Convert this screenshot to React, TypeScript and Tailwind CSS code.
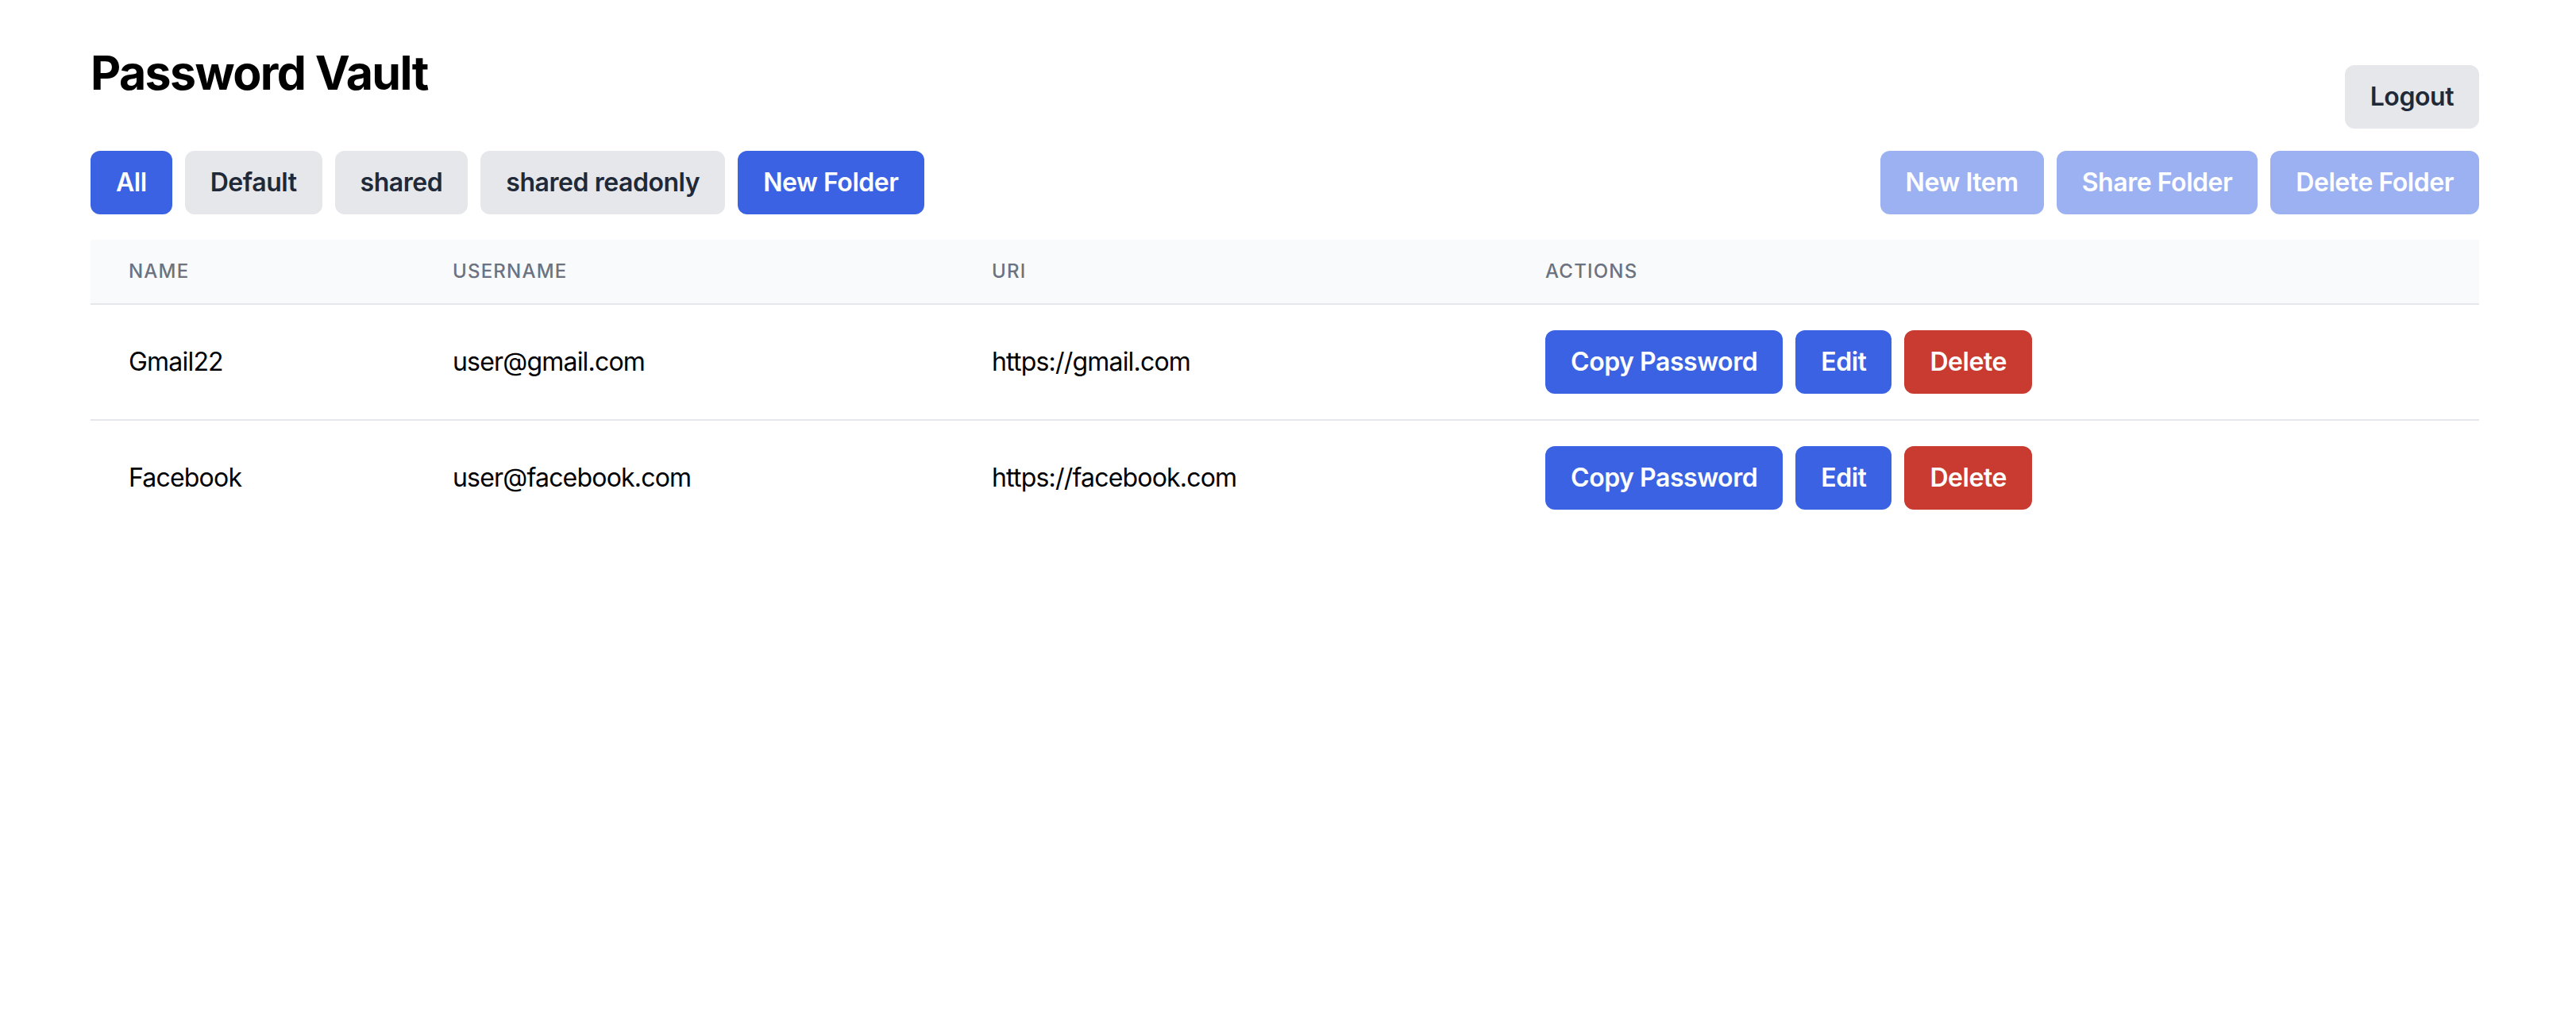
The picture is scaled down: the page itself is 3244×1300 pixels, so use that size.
const rows = [
  { name: "Gmail22", username: "user@gmail.com", uri: "https://gmail.com" },
  { name: "Facebook", username: "user@facebook.com", uri: "https://facebook.com" },
];

const folders = ["Default", "shared", "shared readonly"];

const btn = "h-[80px] rounded-[12px] px-[32px] text-[32px] font-semibold tracking-[-0.45px]";

export default function App() {
  return (
    <div className="min-h-screen bg-white pl-[114px] pr-[122px] pt-[48px] font-['Inter',sans-serif] text-black">
      {/* Header */}
      <div className="flex items-start justify-between">
        <h1 className="mt-[12px] text-[59px] font-bold leading-[64px] tracking-[-1.6px]">Password Vault</h1>
        <button className={`${btn} mt-[34px] bg-[#e5e7eb] text-[#1f2937]`}>Logout</button>
      </div>

      {/* Folder bar */}
      <div className="mt-[28px] flex items-center justify-between">
        <div className="flex gap-[16px]">
          <button className={`${btn} bg-[#3a62e3] text-white`}>All</button>
          {folders.map((f) => (
            <button key={f} className={`${btn} bg-[#e5e7eb] text-[#1f2937]`}>
              {f}
            </button>
          ))}
          <button className={`${btn} bg-[#3a62e3] text-white`}>New Folder</button>
        </div>
        <div className="flex gap-[16px]">
          <button className={`${btn} bg-[#9cb1f1] text-white`}>New Item</button>
          <button className={`${btn} bg-[#9cb1f1] text-white`}>Share Folder</button>
          <button className={`${btn} bg-[#9cb1f1] text-white`}>Delete Folder</button>
        </div>
      </div>

      {/* Items table */}
      <table className="mt-[32px] w-full border-collapse text-left">
        <thead className="bg-[#f9fafb]">
          <tr className="border-b-2 border-[#e5e7eb]">
            <th className="w-[408px] px-[48px] py-[24px] text-[24px] font-medium uppercase leading-[32px] tracking-[1.2px] text-[#6b7280]">
              Name
            </th>
            <th className="w-[679px] px-[48px] py-[24px] text-[24px] font-medium uppercase leading-[32px] tracking-[1.2px] text-[#6b7280]">
              Username
            </th>
            <th className="w-[697px] px-[48px] py-[24px] text-[24px] font-medium uppercase leading-[32px] tracking-[1.2px] text-[#6b7280]">
              URI
            </th>
            <th className="px-[48px] py-[24px] text-[24px] font-medium uppercase leading-[32px] tracking-[1.2px] text-[#6b7280]">
              Actions
            </th>
          </tr>
        </thead>
        <tbody>
          {rows.map((r) => (
            <tr key={r.name} className="border-b-2 border-[#e5e7eb] last:border-b-0">
              <td className="px-[48px] py-[32px] text-[32px] leading-[48px] tracking-[-0.8px]">{r.name}</td>
              <td className="px-[48px] py-[32px] text-[32px] leading-[48px] tracking-[-0.8px]">{r.username}</td>
              <td className="px-[48px] py-[32px] text-[32px] leading-[48px] tracking-[-0.8px]">{r.uri}</td>
              <td className="px-[48px] py-[32px]">
                <div className="flex gap-[16px]">
                  <button className={`${btn} bg-[#3a62e3] text-white`}>Copy Password</button>
                  <button className={`${btn} bg-[#3a62e3] text-white`}>Edit</button>
                  <button className={`${btn} bg-[#c93a31] text-white`}>Delete</button>
                </div>
              </td>
            </tr>
          ))}
        </tbody>
      </table>
    </div>
  );
}
